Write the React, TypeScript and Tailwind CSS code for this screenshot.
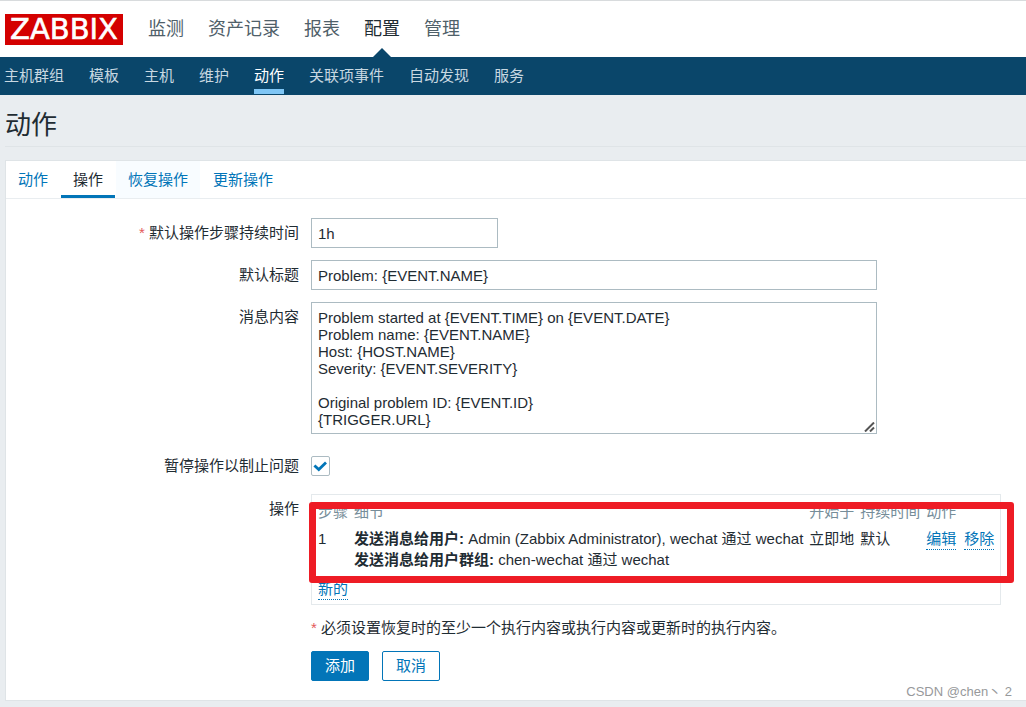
import type { ReactNode } from "react";

const mainMenu = ["监测", "资产记录", "报表", "配置", "管理"];
const subMenu = ["主机群组", "模板", "主机", "维护", "动作", "关联项事件", "自动发现", "服务"];
const tabs = ["动作", "操作", "恢复操作", "更新操作"];

const message = `Problem started at {EVENT.TIME} on {EVENT.DATE}
Problem name: {EVENT.NAME}
Host: {HOST.NAME}
Severity: {EVENT.SEVERITY}

Original problem ID: {EVENT.ID}
{TRIGGER.URL}`;

const field = "block max-w-full border border-[#acbbc2] bg-white px-1.5 text-[15px] text-[#1f2c33] outline-none";

function Row({ label, id, required, children }: { label?: string; id?: string; required?: boolean; children: ReactNode }) {
  return (
    <div className="grid grid-cols-[293px_minmax(0,1fr)] gap-x-3">
      <div className="text-right leading-[30px]">
        {required && <span className="text-[#e45959]">* </span>}
        {label && (id ? <label htmlFor={id}>{label}</label> : <span>{label}</span>)}
      </div>
      <div>{children}</div>
    </div>
  );
}

function DottedLink({ children }: { children: ReactNode }) {
  return (
    <a href="#" className="inline-block border-b border-dotted border-[#0275b8] leading-[21px] text-[#0275b8]">
      {children}
    </a>
  );
}

function Operations() {
  return (
    <div className="relative w-fit border border-[#e4e9ec] px-1.5 pb-px">
      <table className="border-collapse text-left leading-[21px] whitespace-nowrap">
        <thead className="text-[#768d99]">
          <tr>
            <th className="pt-1.5 pr-1.5 pb-0.5 font-normal">步骤</th>
            <th className="pt-1.5 pr-1.5 pb-0.5 font-normal">细节</th>
            <th className="pt-1.5 pr-1.5 pb-0.5 font-normal">开始于</th>
            <th className="pt-1.5 pr-1.5 pb-0.5 font-normal">持续时间</th>
            <th className="pt-1.5 pb-0.5 font-normal">动作</th>
          </tr>
        </thead>
        <tbody className="align-top">
          <tr>
            <td className="py-1 pr-1.5">1</td>
            <td className="py-1 pr-1.5">
              <b>发送消息给用户:</b> Admin (Zabbix Administrator), wechat 通过 wechat
              <br />
              <b>发送消息给用户群组:</b> chen-wechat 通过 wechat
            </td>
            <td className="py-1 pr-1.5">立即地</td>
            <td className="py-1 pr-1.5">默认</td>
            <td className="py-1">
              <div className="flex gap-2">
                <DottedLink>编辑</DottedLink>
                <DottedLink>移除</DottedLink>
              </div>
            </td>
          </tr>
          <tr>
            <td colSpan={5} className="pt-1 pb-[3px]">
              <div className="flex">
                <DottedLink>新的</DottedLink>
              </div>
            </td>
          </tr>
        </tbody>
      </table>
      <div className="pointer-events-none absolute top-[7px] -right-3.5 -left-[3px] h-[81px] rounded-[3px] border-7 border-[#ee1c25]" />
    </div>
  );
}

export default function App() {
  return (
    <div className="relative min-h-screen bg-[#e9edf0] font-['Liberation_Sans','Noto_Sans_CJK_SC',sans-serif] text-[15px] text-[#1f2c33]">
      <header>
        <div className="flex h-[57px] items-center gap-[25px] border-t border-[#d8dbdd] bg-white pl-[5px]">
          <a
            href="#"
            className="flex h-[31px] w-[118px] items-center justify-center bg-[#d40000] font-['DejaVu_Sans',sans-serif] text-[29px] leading-[31px] text-white [-webkit-text-stroke:0.6px_white]"
          >
            ZABBIX
          </a>
          <nav className="flex h-full items-center gap-6 text-[18px] text-[#4f6069]">
            {mainMenu.map((item) =>
              item === "配置" ? (
                <a key={item} href="#" className="relative flex h-full items-center text-[#1f2c33]">
                  {item}
                  <svg className="absolute bottom-0 left-1/2 -translate-x-1/2" width="18" height="9" viewBox="0 0 18 9">
                    <path d="M0 9 9 0l9 9z" fill="#0a466a" />
                  </svg>
                </a>
              ) : (
                <a key={item} href="#">
                  {item}
                </a>
              ),
            )}
          </nav>
        </div>
        <nav className="flex h-[38px] gap-[25px] bg-[#0a466a] pl-1 leading-[37px] text-[#c8d8e1]">
          {subMenu.map((item) => (
            <a
              key={item}
              href="#"
              className={item === "动作" ? "mb-px border-b-5 border-[#7fc6f5] text-white" : ""}
            >
              {item}
            </a>
          ))}
        </nav>
      </header>

      <main className="pb-1.5 pl-[5px]">
        <h1 className="border-b border-[#dfe4e7] pt-3 pb-[3px] text-[26px] leading-9">动作</h1>
        <section className="mt-[13px] border-y border-l border-[#dfe4e7] bg-white pb-[19px]">
          <div role="tablist" className="flex h-[38px] gap-px border-b border-[#e9edf0] leading-[37px]">
            {tabs.map((tab) => (
              <button
                key={tab}
                type="button"
                role="tab"
                aria-selected={tab === "操作"}
                className={
                  tab === "操作"
                    ? "h-[37px] border-b-3 border-[#0275b8] px-3 leading-[37px]"
                    : tab === "恢复操作"
                      ? "h-[37px] bg-[#f8fcff] px-3 text-[#0275b8]"
                      : "h-[37px] px-3 text-[#0275b8]"
                }
              >
                {tab}
              </button>
            ))}
          </div>

          <form className="flex flex-col gap-3 pt-[19px]">
            <Row label="默认操作步骤持续时间" id="period" required>
              <input id="period" defaultValue="1h" className={`${field} h-[30px] w-[187px]`} />
            </Row>
            <Row label="默认标题" id="subject">
              <input id="subject" defaultValue="Problem: {EVENT.NAME}" className={`${field} h-[30px] w-[566px]`} />
            </Row>
            <Row label="消息内容" id="message">
              <div className="relative w-[566px] max-w-full">
                <textarea
                  id="message"
                  defaultValue={message}
                  className={`${field} h-[132px] w-full resize-none overflow-hidden py-1.5 leading-[17px]`}
                />
                <svg className="absolute right-0.5 bottom-0.5" width="11" height="10" viewBox="0 0 11 10" stroke="#555" strokeWidth="2">
                  <path d="M1 9.5 10 .5M6 9.5l4-4" />
                </svg>
              </div>
            </Row>
            <div className="grid grid-cols-[293px_minmax(0,1fr)] items-center gap-x-3 pt-2.5 pb-1.5">
              <label htmlFor="pause" className="text-right leading-5">
                暂停操作以制止问题
              </label>
              <div className="relative h-5 w-[19px]">
                <input
                  id="pause"
                  type="checkbox"
                  defaultChecked
                  className="peer block h-5 w-[19px] appearance-none rounded-xs border border-[#acbbc2] bg-white"
                />
                <svg
                  className="pointer-events-none absolute top-0 left-0 hidden peer-checked:block"
                  width="19"
                  height="20"
                  viewBox="0 0 19 20"
                  fill="none"
                  stroke="#0275b8"
                  strokeWidth="2.8"
                >
                  <path d="M3.4 9.4 7.8 13.6l7.2-7" />
                </svg>
              </div>
            </div>
            <Row label="操作">
              <Operations />
            </Row>
            <Row>
              <p className="leading-[22px]">
                <span className="text-[#e45959]">*</span> 必须设置恢复时的至少一个执行内容或执行内容或更新时的执行内容。
              </p>
              <div className="mt-3 flex gap-[13px]">
                <button type="button" className="h-[30px] rounded-xs border border-[#0275b8] bg-[#0275b8] px-[13px] leading-7 text-white">
                  添加
                </button>
                <button type="button" className="h-[30px] rounded-xs border border-[#0275b8] bg-white px-[13px] leading-7 text-[#0275b8]">
                  取消
                </button>
              </div>
            </Row>
          </form>
        </section>
      </main>
      <span className="absolute right-3.5 bottom-1.5 text-[13px] leading-[18px] text-[#97999b]">CSDN @chen丶 2</span>
    </div>
  );
}
